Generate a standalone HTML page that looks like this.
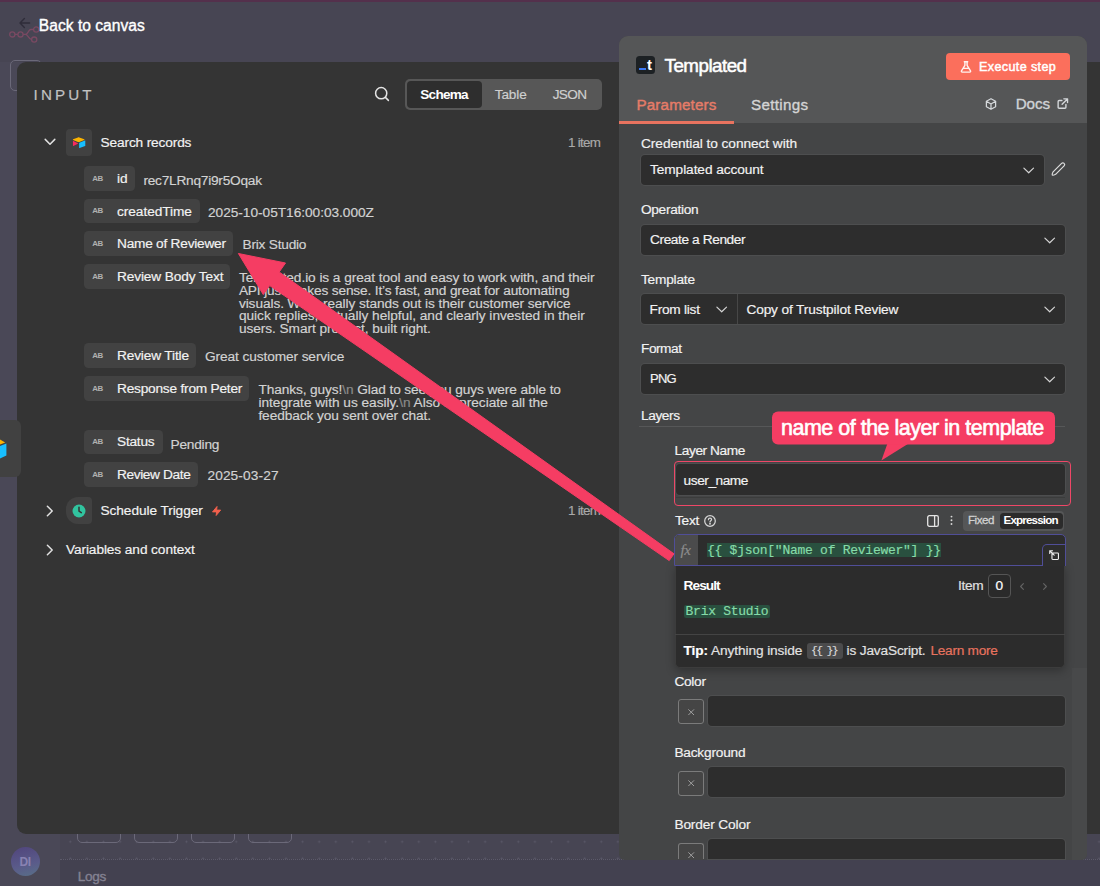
<!DOCTYPE html>
<html lang="en">
<head>
<meta charset="utf-8">
<title>n8n – Templated node</title>
<style>
*{box-sizing:border-box;margin:0;padding:0}
html,body{width:1100px;height:886px;overflow:hidden;background:#474553}
body{position:relative;font-family:"Liberation Sans",sans-serif;color:#fff}
.a{position:absolute}
.t{position:absolute;white-space:pre;line-height:1;-webkit-text-stroke:.18px currentColor}
.mono{font-family:"Liberation Mono",monospace}
.fld{position:absolute;background:#2d2d2d;border-radius:4px;height:30px;box-shadow:0 0 0 1px rgba(255,255,255,.05)}
.pill{position:absolute;background:#424242;border-radius:4.5px;height:24.6px;left:84.3px}
.sw{position:absolute;left:678px;width:26px;height:25px;border:1px solid #7b7b7b;border-radius:3px;background:#454545}
svg{position:absolute;overflow:visible}
</style>
</head>
<body>
<!-- ======= canvas background ======= -->
<div class="a" style="left:0;top:0;width:1100px;height:2px;background:#54304c"></div>
<div class="a" style="left:0;top:62px;width:60px;height:824px;background:#4a4857"></div>
<div class="a" style="left:60px;top:859px;width:1040px;height:27px;background:#434150;border-top:1px dotted #5d5b6a"></div>
<div class="a" style="left:60px;top:834px;width:1040px;height:25px;background-image:radial-gradient(circle,#5c5a6a .7px,transparent 1.2px);background-size:16.6px 16.6px;background-position:2px -.5px"></div>
<div class="a" style="left:10px;top:60px;width:32px;height:31px;border:1px solid #6b6979;border-radius:5px"></div>
<div class="a" style="left:77px;top:812px;width:44px;height:31px;border:1px solid #6b6979;border-radius:5px"></div>
<div class="a" style="left:134px;top:812px;width:44px;height:31px;border:1px solid #6b6979;border-radius:5px"></div>
<div class="a" style="left:191px;top:812px;width:44px;height:31px;border:1px solid #6b6979;border-radius:5px"></div>
<div class="a" style="left:248px;top:812px;width:44px;height:31px;border:1px solid #6b6979;border-radius:5px"></div>
<!-- n8n logo -->
<svg style="left:8px;top:24px" width="34" height="22" viewBox="0 0 34 22" fill="none" stroke="#8f4b69" stroke-width="1.3" opacity=".7">
<circle cx="4.3" cy="10.4" r="2.6"/><circle cx="12.5" cy="10.4" r="2.6"/><path d="M6.9 10.4H9.9M15.1 10.4H17.5c2.5 0 2.6-4.6 5.3-4.9h2.8M17.5 10.4c2.5 0 2.8 4.4 5.8 5"/><circle cx="28.2" cy="5.5" r="2.6"/><circle cx="26.2" cy="15.6" r="2.6"/>
</svg>
<!-- back arrow -->
<svg style="left:19px;top:17px" width="12" height="12" viewBox="0 0 12 12" fill="none" stroke="#2f2d3a" stroke-width="1.4" stroke-linecap="round" stroke-linejoin="round"><path d="M10.6 6H1.2M5.4 1.4L1 6l4.4 4.6"/></svg>
<!-- avatar -->
<div class="a" style="left:11px;top:847px;width:29px;height:29px;border-radius:50%;background:linear-gradient(165deg,#52487e 10%,#5a5b8a 60%,#587088 100%)"></div>

<!-- ======= NDV backdrop / input panel ======= -->
<div class="a" style="left:17px;top:62px;width:1090px;height:772px;background:#343434;border-radius:9px 0 0 9px"></div>
<!-- node stub on left -->
<div class="a" style="left:-6px;top:420px;width:27px;height:57px;background:#414141;border-radius:6px"></div>
<svg style="left:0;top:439px" width="8" height="21" viewBox="0 0 8 21"><path d="M0 0.6L5.2 3.4 0 5.6z" fill="#fcb400"/><path d="M0 7L6.4 4.4V16.4L0 19.4z" fill="#18bfff"/></svg>

<!-- search icon -->
<svg style="left:373.3px;top:85.4px" width="18" height="18" viewBox="0 0 18 18" fill="none" stroke="#e4e4e4" stroke-width="1.5" stroke-linecap="round"><circle cx="8.2" cy="8.2" r="5.6"/><path d="M12.4 12.4L15.4 15.4"/></svg>
<!-- tabs -->
<div class="a" style="left:405px;top:78.6px;width:197px;height:31.4px;background:#575757;border-radius:5px"></div>
<div class="a" style="left:407px;top:81px;width:75px;height:27px;background:#2e2e2e;border-radius:4px"></div>

<!-- search records row -->
<svg style="left:44px;top:138px" width="12" height="8" viewBox="0 0 12 8" fill="none" stroke="#e0e0e0" stroke-width="1.5" stroke-linecap="round" stroke-linejoin="round"><path d="M1.2 1.4L6 6.2 10.8 1.4"/></svg>
<div class="a" style="left:66px;top:129px;width:26px;height:27px;background:#414141;border-radius:4px"></div>
<svg style="left:72.3px;top:137px" width="13.3" height="11.4" viewBox="0 0 14 12"><path d="M6.3 0.4L1.1 2.5c-.3.1-.3.5 0 .6l5.2 2.1c.5.2 1 .2 1.4 0l5.2-2.1c.3-.1.3-.5 0-.6L7.7.4c-.5-.2-1-.2-1.4 0z" fill="#fcb400"/><path d="M7.5 6.3V11.4c0 .3.3.4.5.3l5.8-2.3c.2-.1.2-.2.2-.3V4c0-.3-.3-.4-.5-.3L7.7 6c-.1.1-.2.2-.2.3z" fill="#18bfff"/><path d="M6.1 6.6L1.5 4.3C1.3 4.2 1 4.4 1 4.6v4.6c0 .2.2.4.4.3L6.2 7.1c.2-.1.2-.4-.1-.5z" fill="#f82b60"/></svg>

<!-- pills -->
<div class="pill" style="top:166px;width:51px"></div>
<div class="pill" style="top:198.8px;width:115.5px"></div>
<div class="pill" style="top:231.4px;width:149px"></div>
<div class="pill" style="top:264px;width:146px"></div>
<div class="pill" style="top:343px;width:111.5px"></div>
<div class="pill" style="top:376.2px;width:165px"></div>
<div class="pill" style="top:429.6px;width:78.5px"></div>
<div class="pill" style="top:462.2px;width:114px"></div>

<!-- schedule trigger row -->
<svg style="left:46px;top:504.5px" width="8" height="12" viewBox="0 0 8 12" fill="none" stroke="#e0e0e0" stroke-width="1.5" stroke-linecap="round" stroke-linejoin="round"><path d="M1.4 1.2L6.2 6 1.4 10.8"/></svg>
<div class="a" style="left:66px;top:497px;width:26px;height:27px;background:#414141;border-radius:12px 4px 4px 12px"></div>
<svg style="left:72px;top:504px" width="14" height="14" viewBox="0 0 14 14"><circle cx="7" cy="7" r="6.5" fill="#31c49f"/><path d="M7 3.3V7.2L9.3 8.6" fill="none" stroke="#343434" stroke-width="1.5" stroke-linecap="round" stroke-linejoin="round"/></svg>
<svg style="left:212.3px;top:505.6px" width="9.2" height="10" viewBox="2 1 20 22"><path d="M13 2L3 14H12L11 22 21 10H12z" fill="#f2604c" stroke="#f2604c" stroke-width="2" stroke-linejoin="round"/></svg>
<!-- variables row -->
<svg style="left:46px;top:543.5px" width="8" height="12" viewBox="0 0 8 12" fill="none" stroke="#e0e0e0" stroke-width="1.5" stroke-linecap="round" stroke-linejoin="round"><path d="M1.4 1.2L6.2 6 1.4 10.8"/></svg>

<!-- ======= main node panel ======= -->
<div class="a" style="left:618.5px;top:36px;width:468.5px;height:823.5px;background:#444546;border-radius:9px 9px 6px 6px;overflow:hidden">
  <div class="a" style="left:0;top:0;width:100%;height:86.5px;background:#555657"></div>
  <div class="a" style="left:0;top:85px;width:115.5px;height:2.5px;background:#e8735f"></div>
  <div class="a" style="left:453.5px;top:632px;width:15px;height:200px;background:#48494a"></div>
</div>
<!-- header: node icon -->
<div class="a" style="left:636px;top:56px;width:19px;height:18px;background:#1d2124;border-radius:3.5px"></div>
<div class="a" style="left:639px;top:67.5px;width:7px;height:2px;background:#3a78f2"></div>
<!-- execute button -->
<div class="a" style="left:946px;top:53.2px;width:124px;height:27px;background:#fb6f5c;border-radius:4px"></div>
<svg style="left:960px;top:61px" width="12" height="12" viewBox="0 0 12 12" fill="none" stroke="#fff3f0" stroke-width="1.4" stroke-linecap="round" stroke-linejoin="round"><path d="M4.3 0.8H7.7M4.9 0.8V4.3L1.5 9.8c-.3.6 0 1.3.7 1.3h7.6c.7 0 1-.7.7-1.3L7.1 4.3V0.8M3 7.4H9"/></svg>
<!-- cube + external link -->
<svg style="left:985.4px;top:98.3px" width="12" height="12" viewBox="0 0 13 13" fill="none" stroke="#d5d8db" stroke-width="1.35" stroke-linejoin="round"><path d="M6.5 0.8L11.5 3.6V9.4L6.5 12.2 1.5 9.4V3.6zM1.5 3.6L6.5 6.5 11.5 3.6M6.5 6.5V12.2"/></svg>
<svg style="left:1057.3px;top:97.6px" width="11.4" height="11.4" viewBox="0 0 12 12" fill="none" stroke="#d5d8db" stroke-width="1.45" stroke-linecap="round" stroke-linejoin="round"><path d="M9.4 6.8V9.8c0 .6-.4 1-1 1H2.2c-.6 0-1-.4-1-1V3.6c0-.6.4-1 1-1H5.2M7.2 0.9H11.1V4.8M11 1L5.4 6.6"/></svg>

<!-- fields -->
<div class="fld" style="left:641px;top:155px;width:403px"></div>
<div class="fld" style="left:641px;top:225px;width:424px"></div>
<div class="fld" style="left:641px;top:294px;width:424px"></div>
<div class="a" style="left:737px;top:294px;width:1px;height:30px;background:#474747"></div>
<div class="fld" style="left:641px;top:364px;width:424px"></div>
<!-- chevrons -->
<svg style="left:1022.8px;top:166.5px" width="11.4" height="7" viewBox="0 0 13 8" fill="none" stroke="#d4d4d4" stroke-width="1.35" stroke-linecap="round" stroke-linejoin="round"><path d="M1 1.2L6.5 6.6 12 1.2"/></svg>
<svg style="left:1043.8px;top:236.5px" width="11.4" height="7" viewBox="0 0 13 8" fill="none" stroke="#d4d4d4" stroke-width="1.35" stroke-linecap="round" stroke-linejoin="round"><path d="M1 1.2L6.5 6.6 12 1.2"/></svg>
<svg style="left:715.8px;top:306px" width="11.4" height="7" viewBox="0 0 13 8" fill="none" stroke="#d4d4d4" stroke-width="1.35" stroke-linecap="round" stroke-linejoin="round"><path d="M1 1.2L6.5 6.6 12 1.2"/></svg>
<svg style="left:1043.8px;top:306px" width="11.4" height="7" viewBox="0 0 13 8" fill="none" stroke="#d4d4d4" stroke-width="1.35" stroke-linecap="round" stroke-linejoin="round"><path d="M1 1.2L6.5 6.6 12 1.2"/></svg>
<svg style="left:1043.8px;top:375.5px" width="11.4" height="7" viewBox="0 0 13 8" fill="none" stroke="#d4d4d4" stroke-width="1.35" stroke-linecap="round" stroke-linejoin="round"><path d="M1 1.2L6.5 6.6 12 1.2"/></svg>
<!-- pencil -->
<svg style="left:1051px;top:162px" width="15" height="15" viewBox="0 0 15 15" fill="none" stroke="#dcdcdc" stroke-width="1.2" stroke-linecap="round" stroke-linejoin="round"><path d="M10.6 1.3c.7-.7 1.8-.7 2.5 0s.7 1.8 0 2.5L4.6 12.3Q2.2 13.6 1.3 13.1 .9 12.2 2.1 9.8z"/></svg>

<!-- layers divider -->
<div class="a" style="left:639px;top:426px;width:426px;height:1px;background:#565758"></div>
<!-- layer name input + red outline -->
<div class="fld" style="left:676px;top:463.5px;width:389px;height:31.5px"></div>
<div class="a" style="left:676px;top:496.5px;width:389px;height:1px;background:#3b3c3c"></div>
<div class="a" style="left:674px;top:460.5px;width:396.5px;height:45px;border:1.8px solid #ee4767;border-radius:4px"></div>

<!-- Text row tools -->
<svg style="left:704.3px;top:514.8px" width="12" height="12" viewBox="0 0 12 12" fill="none" stroke="#d6d6d6" stroke-width="1.25"><circle cx="6" cy="6" r="5.3"/><path d="M4.4 4.7c0-1 .7-1.6 1.6-1.6s1.6.6 1.6 1.4c0 1.1-1.6 1.2-1.6 2.4" stroke-linecap="round"/><circle cx="6" cy="8.7" r=".35" fill="#d6d6d6"/></svg>
<svg style="left:927px;top:514.5px" width="12" height="12" viewBox="0 0 12 12" fill="none" stroke="#e4e4e4" stroke-width="1.3" stroke-linejoin="round"><rect x=".7" y=".7" width="10.6" height="10.6" rx="1.6"/><path d="M7.6 .7V11.3"/></svg>
<svg style="left:949.5px;top:514.5px" width="3" height="12" viewBox="0 0 3 12" fill="#d8d8d8"><circle cx="1.5" cy="1.6" r=".95"/><circle cx="1.5" cy="5.3" r=".95"/><circle cx="1.5" cy="9" r=".95"/></svg>
<div class="a" style="left:962.5px;top:511px;width:101.5px;height:19.5px;background:#555657;border-radius:4px"></div>
<div class="a" style="left:999.5px;top:513px;width:63px;height:15.5px;background:#2b2b2b;border-radius:3.5px"></div>

<!-- expression editor -->
<div class="a" style="left:674.5px;top:565px;width:390.5px;height:102.5px;background:#2c2c2c;border-radius:0 0 5px 5px;border:1px solid #3c3c3c;border-top:none;box-shadow:0 3px 10px rgba(0,0,0,.28)"></div>
<div class="a" style="left:674.5px;top:633.5px;width:390.5px;height:1px;background:#444"></div>
<div class="a" style="left:674px;top:534px;width:392px;height:32px;background:#2d2d2d;border:1px solid #504e98;border-radius:5px 5px 0 0"></div>
<div class="a" style="left:675px;top:535px;width:22.5px;height:30px;background:#4b4b4c;border-radius:4px 0 0 0"></div>
<div class="a" style="left:707px;top:543px;width:234px;height:14px;background:#29503f"></div>
<div class="a" style="left:1042px;top:543.5px;width:24px;height:22.5px;background:#2d2d2d;border:1px solid #504e98;border-radius:5px 0 0 0;border-bottom:none"></div>
<svg style="left:1048.5px;top:549.5px" width="10.2" height="10.2" viewBox="0 0 11 11" fill="none" stroke="#ededed" stroke-width="1.2" stroke-linecap="round" stroke-linejoin="round"><path d="M3.2 3.2H9.3c.5 0 .9.4.9.9v5.2c0 .5-.4.9-.9.9H4.1c-.5 0-.9-.4-.9-.9zM0.8 0.8L5.6 5.6M0.8 3.8V0.8H3.8"/></svg>
<div class="a" style="left:684px;top:605px;width:86px;height:13px;background:#29503f;border-radius:2px"></div>
<div class="a" style="left:988px;top:574px;width:22.5px;height:23.5px;border:1px solid #555;border-radius:4px;background:#2a2a2a"></div>
<svg style="left:1019.5px;top:582.5px" width="4" height="7" viewBox="0 0 4 7" fill="none" stroke="#646464" stroke-width="1.1" stroke-linecap="round" stroke-linejoin="round"><path d="M3.4 .6L.6 3.5 3.4 6.4"/></svg>
<svg style="left:1042.5px;top:582.5px" width="4" height="7" viewBox="0 0 4 7" fill="none" stroke="#646464" stroke-width="1.1" stroke-linecap="round" stroke-linejoin="round"><path d="M.6 .6L3.4 3.5 .6 6.4"/></svg>
<div class="a" style="left:807px;top:643px;width:35.5px;height:16px;background:#4b4b4c;border-radius:3px"></div>

<!-- color rows -->
<div class="fld" style="left:708px;top:695.6px;width:357px"></div>
<div class="sw" style="top:699.2px"></div>
<div class="fld" style="left:708px;top:767px;width:357px"></div>
<div class="sw" style="top:771.2px"></div>
<div class="fld" style="left:708px;top:838.6px;width:357px;height:20.9px;border-radius:4px 4px 0 0"></div>
<div class="sw" style="top:842.8px;height:16.7px;border-bottom:none;border-radius:3px 3px 0 0"></div>
<svg style="left:688px;top:708.6px" width="6.4" height="6.4" viewBox="0 0 7 7" stroke="#a6a6a6" stroke-width="1" stroke-linecap="round"><path d="M.7 .7L6.3 6.3M6.3 .7L.7 6.3"/></svg>
<svg style="left:688px;top:780.4px" width="6.4" height="6.4" viewBox="0 0 7 7" stroke="#a6a6a6" stroke-width="1" stroke-linecap="round"><path d="M.7 .7L6.3 6.3M6.3 .7L.7 6.3"/></svg>
<svg style="left:688px;top:852px" width="6.4" height="6.4" viewBox="0 0 7 7" stroke="#a6a6a6" stroke-width="1" stroke-linecap="round"><path d="M.7 .7L6.3 6.3M6.3 .7L.7 6.3"/></svg>

<span class="t" id="t0" style="left:38.8px;top:18.0px;font-size:15.6px;color:#fff;letter-spacing:0.02px;-webkit-text-stroke:0.35px #fff">Back to canvas</span>
<span class="t" id="t1" style="left:19.5px;top:856.0px;font-size:12.0px;color:#8982b2;font-weight:bold;-webkit-text-stroke:0;letter-spacing:-0.50px;">DI</span>
<span class="t" id="t2" style="left:77.7px;top:870.0px;font-size:13.6px;color:#858393;letter-spacing:-0.33px;-webkit-text-stroke:0.35px #858393">Logs</span>
<span class="t" id="t3" style="left:33.6px;top:87.0px;font-size:15.2px;color:#c2c2c2;letter-spacing:3.11px;">INPUT</span>
<span class="t" id="t4" style="left:420.3px;top:88.0px;font-size:13.6px;color:#fff;font-weight:bold;-webkit-text-stroke:0;letter-spacing:-0.75px;">Schema</span>
<span class="t" id="t5" style="left:494.8px;top:88.0px;font-size:13.6px;color:#cfcfcf;letter-spacing:-0.15px;">Table</span>
<span class="t" id="t6" style="left:552.7px;top:88.0px;font-size:13.6px;color:#cfcfcf;letter-spacing:-0.66px;">JSON</span>
<span class="t" id="t7" style="left:568.0px;top:136.0px;font-size:13.4px;color:#a9a9a9;letter-spacing:-0.69px;">1 item</span>
<span class="t" id="t8" style="left:568.0px;top:504.0px;font-size:13.4px;color:#a9a9a9;letter-spacing:-0.69px;">1 item</span>
<span class="t" id="t9" style="left:100.6px;top:136.0px;font-size:13.7px;color:#f2f2f2;letter-spacing:-0.15px;">Search records</span>
<span class="t" id="t10" style="left:100.5px;top:504.0px;font-size:13.7px;color:#f2f2f2;letter-spacing:-0.08px;">Schedule Trigger</span>
<span class="t" id="t11" style="left:65.9px;top:543.0px;font-size:13.7px;color:#f2f2f2;letter-spacing:-0.09px;">Variables and context</span>
<span class="t" id="t12" style="left:117.0px;top:172.0px;font-size:13.7px;color:#f2f2f2;letter-spacing:-0.06px;">id</span>
<span class="t" id="t13" style="left:117.0px;top:205.0px;font-size:13.7px;color:#f2f2f2;letter-spacing:-0.06px;">createdTime</span>
<span class="t" id="t14" style="left:117.0px;top:237.0px;font-size:13.7px;color:#f2f2f2;letter-spacing:-0.24px;">Name of Reviewer</span>
<span class="t" id="t15" style="left:117.0px;top:270.0px;font-size:13.7px;color:#f2f2f2;letter-spacing:-0.14px;">Review Body Text</span>
<span class="t" id="t16" style="left:117.0px;top:349.0px;font-size:13.7px;color:#f2f2f2;letter-spacing:-0.16px;">Review Title</span>
<span class="t" id="t17" style="left:117.0px;top:382.0px;font-size:13.7px;color:#f2f2f2;letter-spacing:-0.22px;">Response from Peter</span>
<span class="t" id="t18" style="left:117.0px;top:435.0px;font-size:13.7px;color:#f2f2f2;letter-spacing:-0.24px;">Status</span>
<span class="t" id="t19" style="left:117.0px;top:468.0px;font-size:13.7px;color:#f2f2f2;letter-spacing:-0.38px;">Review Date</span>
<span class="t" id="t20" style="left:143.4px;top:174.0px;font-size:13.7px;color:#d2d2d2;letter-spacing:-0.24px;">rec7LRnq7i9r5Oqak</span>
<span class="t" id="t21" style="left:208.0px;top:206.0px;font-size:13.7px;color:#d2d2d2;letter-spacing:-0.03px;">2025-10-05T16:00:03.000Z</span>
<span class="t" id="t22" style="left:242.5px;top:238.0px;font-size:13.7px;color:#d2d2d2;letter-spacing:-0.22px;">Brix Studio</span>
<span class="t" id="t23" style="left:238.9px;top:271.0px;font-size:13.7px;color:#d2d2d2;letter-spacing:-0.07px;">Templated.io is a great tool and easy to work with, and their</span>
<span class="t" id="t24" style="left:238.9px;top:284.0px;font-size:13.7px;color:#d2d2d2;letter-spacing:-0.15px;">API just makes sense. It’s fast, and great for automating</span>
<span class="t" id="t25" style="left:238.9px;top:297.0px;font-size:13.7px;color:#d2d2d2;letter-spacing:-0.08px;">visuals. What really stands out is their customer service</span>
<span class="t" id="t26" style="left:238.9px;top:309.0px;font-size:13.7px;color:#d2d2d2;letter-spacing:-0.03px;">quick replies, actually helpful, and clearly invested in their</span>
<span class="t" id="t27" style="left:238.9px;top:322.0px;font-size:13.7px;color:#d2d2d2;letter-spacing:-0.06px;">users. Smart product, built right.</span>
<span class="t" id="t28" style="left:205.0px;top:350.0px;font-size:13.7px;color:#d2d2d2;letter-spacing:-0.10px;">Great customer service</span>
<span class="t" id="t29" style="left:258.4px;top:383.0px;font-size:13.7px;color:#d2d2d2;letter-spacing:-0.10px;">Thanks, guys!<span style="color:#8a8a8a">\n</span> Glad to see you guys were able to</span>
<span class="t" id="t30" style="left:258.4px;top:396.0px;font-size:13.7px;color:#d2d2d2;letter-spacing:-0.02px;">integrate with us easily.<span style="color:#8a8a8a">\n</span> Also appreciate all the</span>
<span class="t" id="t31" style="left:258.4px;top:409.0px;font-size:13.7px;color:#d2d2d2;letter-spacing:-0.09px;">feedback you sent over chat.</span>
<span class="t" id="t32" style="left:170.5px;top:438.0px;font-size:13.7px;color:#d2d2d2;letter-spacing:-0.22px;">Pending</span>
<span class="t" id="t33" style="left:207.4px;top:469.0px;font-size:13.7px;color:#d2d2d2;letter-spacing:0.13px;">2025-03-27</span>
<span class="t" id="t34" style="left:647.0px;top:57.0px;font-size:15.0px;color:#fff;font-weight:bold;-webkit-text-stroke:0;letter-spacing:0.40px;">t</span>
<span class="t" id="t35" style="left:664.6px;top:57.0px;font-size:18.8px;color:#fff;letter-spacing:-0.53px;-webkit-text-stroke:0.5px #fff">Templated</span>
<span class="t" id="t36" style="left:979.0px;top:61.0px;font-size:12.6px;color:#fff;letter-spacing:0.36px;-webkit-text-stroke:0.45px #fff">Execute step</span>
<span class="t" id="t37" style="left:636.4px;top:97.0px;font-size:15.2px;color:#e67c68;letter-spacing:0.17px;-webkit-text-stroke:0.4px #e67c68">Parameters</span>
<span class="t" id="t38" style="left:751.0px;top:97.0px;font-size:15.2px;color:#d4d4d4;letter-spacing:0.30px;-webkit-text-stroke:.35px #d4d4d4">Settings</span>
<span class="t" id="t39" style="left:1015.7px;top:96.0px;font-size:15.2px;color:#d0d3d6;letter-spacing:-0.10px;-webkit-text-stroke:.35px #d0d3d6">Docs</span>
<span class="t" id="t40" style="left:641.0px;top:137.0px;font-size:13.7px;color:#f2f2f2;letter-spacing:-0.06px;">Credential to connect with</span>
<span class="t" id="t41" style="left:650.0px;top:163.0px;font-size:13.7px;color:#f2f2f2;letter-spacing:-0.08px;">Templated account</span>
<span class="t" id="t42" style="left:641.0px;top:203.0px;font-size:13.7px;color:#f2f2f2;letter-spacing:-0.32px;">Operation</span>
<span class="t" id="t43" style="left:650.0px;top:233.0px;font-size:13.7px;color:#f2f2f2;letter-spacing:-0.40px;">Create a Render</span>
<span class="t" id="t44" style="left:641.0px;top:273.0px;font-size:13.7px;color:#f2f2f2;letter-spacing:-0.22px;">Template</span>
<span class="t" id="t45" style="left:649.6px;top:303.0px;font-size:13.7px;color:#f2f2f2;letter-spacing:-0.26px;">From list</span>
<span class="t" id="t46" style="left:746.4px;top:303.0px;font-size:13.7px;color:#f2f2f2;letter-spacing:-0.13px;">Copy of Trustpilot Review</span>
<span class="t" id="t47" style="left:641.0px;top:342.0px;font-size:13.7px;color:#f2f2f2;letter-spacing:-0.47px;">Format</span>
<span class="t" id="t48" style="left:650.0px;top:372.0px;font-size:13.0px;color:#f2f2f2;letter-spacing:-0.79px;">PNG</span>
<span class="t" id="t49" style="left:641.0px;top:409.0px;font-size:13.7px;color:#f2f2f2;letter-spacing:-0.42px;">Layers</span>
<span class="t" id="t51" style="left:674.6px;top:444.0px;font-size:13.7px;color:#f2f2f2;letter-spacing:-0.42px;">Layer Name</span>
<span class="t" id="t52" style="left:683.6px;top:474.0px;font-size:13.7px;color:#f2f2f2;letter-spacing:-0.46px;">user_name</span>
<span class="t" id="t53" style="left:675.0px;top:514.0px;font-size:13.7px;color:#f2f2f2;letter-spacing:-0.24px;">Text</span>
<span class="t" id="t54" style="left:968.0px;top:514.0px;font-size:11.6px;color:#d2d2d2;letter-spacing:-0.49px;-webkit-text-stroke:.3px #d2d2d2">Fixed</span>
<span class="t" id="t55" style="left:1003.6px;top:514.0px;font-size:11.6px;color:#fff;font-weight:bold;-webkit-text-stroke:0;letter-spacing:-0.84px;">Expression</span>
<span class="t" id="t56" style="left:680.5px;top:543.0px;font-size:15.0px;color:#8d8d8d;font-family:'Liberation Serif',serif;letter-spacing:-0.33px;font-style:italic">fx</span>
<span class="t" id="t57" style="left:707.0px;top:544.0px;font-size:13.0px;color:#86dba8;font-family:'Liberation Mono',monospace;letter-spacing:-0.26px;">{{ $json["Name of Reviewer"] }}</span>
<span class="t" id="t58" style="left:683.6px;top:579.0px;font-size:13.7px;color:#fff;font-weight:bold;-webkit-text-stroke:0;letter-spacing:-0.97px;">Result</span>
<span class="t" id="t59" style="left:685.6px;top:605.1px;font-size:13.0px;color:#86dba8;font-family:'Liberation Mono',monospace;letter-spacing:-0.28px;">Brix Studio</span>
<span class="t" id="t60" style="left:958.0px;top:579.0px;font-size:13.7px;color:#e0e0e0;letter-spacing:-0.34px;">Item</span>
<span class="t" id="t61" style="left:995.4px;top:579.0px;font-size:13.7px;color:#fff;letter-spacing:-0.23px;">0</span>
<span class="t" id="t62" style="left:683.6px;top:644.0px;font-size:13.7px;color:#e2e2e2;letter-spacing:-0.10px;"><b style="color:#fff">Tip:</b> Anything inside</span>
<span class="t" id="t63" style="left:811.0px;top:645.0px;font-size:11.5px;color:#d8d8d8;font-family:'Liberation Mono',monospace;letter-spacing:-1.73px;">{{ }}</span>
<span class="t" id="t64" style="left:846.6px;top:644.0px;font-size:13.7px;color:#e2e2e2;letter-spacing:-0.18px;">is JavaScript.</span>
<span class="t" id="t65" style="left:930.4px;top:644.0px;font-size:13.7px;color:#e8735f;letter-spacing:-0.27px;">Learn more</span>
<span class="t" id="t66" style="left:674.4px;top:675.0px;font-size:13.7px;color:#f2f2f2;letter-spacing:-0.28px;">Color</span>
<span class="t" id="t67" style="left:674.4px;top:746.0px;font-size:13.7px;color:#f2f2f2;letter-spacing:-0.21px;">Background</span>
<span class="t" id="t68" style="left:674.4px;top:818.0px;font-size:13.7px;color:#f2f2f2;letter-spacing:-0.13px;">Border Color</span>
<span class="t" id="t69" style="left:92.3px;top:175.0px;font-size:7.9px;color:#b0b0b0;font-weight:bold;-webkit-text-stroke:0;letter-spacing:-0.51px;">AB</span>
<span class="t" id="t70" style="left:92.3px;top:207.0px;font-size:7.9px;color:#b0b0b0;font-weight:bold;-webkit-text-stroke:0;letter-spacing:-0.51px;">AB</span>
<span class="t" id="t71" style="left:92.3px;top:240.0px;font-size:7.9px;color:#b0b0b0;font-weight:bold;-webkit-text-stroke:0;letter-spacing:-0.51px;">AB</span>
<span class="t" id="t72" style="left:92.3px;top:273.0px;font-size:7.9px;color:#b0b0b0;font-weight:bold;-webkit-text-stroke:0;letter-spacing:-0.51px;">AB</span>
<span class="t" id="t73" style="left:92.3px;top:352.0px;font-size:7.9px;color:#b0b0b0;font-weight:bold;-webkit-text-stroke:0;letter-spacing:-0.51px;">AB</span>
<span class="t" id="t74" style="left:92.3px;top:385.0px;font-size:7.9px;color:#b0b0b0;font-weight:bold;-webkit-text-stroke:0;letter-spacing:-0.51px;">AB</span>
<span class="t" id="t75" style="left:92.3px;top:438.0px;font-size:7.9px;color:#b0b0b0;font-weight:bold;-webkit-text-stroke:0;letter-spacing:-0.51px;">AB</span>
<span class="t" id="t76" style="left:92.3px;top:471.0px;font-size:7.9px;color:#b0b0b0;font-weight:bold;-webkit-text-stroke:0;letter-spacing:-0.51px;">AB</span>
<svg style="left:0;top:0" width="1100" height="886" viewBox="0 0 1100 886"><path d="M674.0 553.8L279.2 272.0L285.5 263.0L238.4 253.5L263.3 294.6L269.7 285.6L669.2 560.6z" fill="#f53d63" stroke="#f53d63" stroke-width="1" stroke-linejoin="round"/></svg>
<svg style="left:0;top:0" width="1100" height="886" viewBox="0 0 1100 886"><path d="M888 442L881.4 460.5 911 442z" fill="#f53d63"/><rect x="772" y="411.5" width="283" height="33" rx="6" fill="#f53d63"/></svg>
<span class="t" id="t50" style="left:781.0px;top:418.0px;font-size:21.5px;color:#fff;letter-spacing:-0.50px;-webkit-text-stroke:0.6px #fff">name of the layer in template</span>
</body>
</html>
